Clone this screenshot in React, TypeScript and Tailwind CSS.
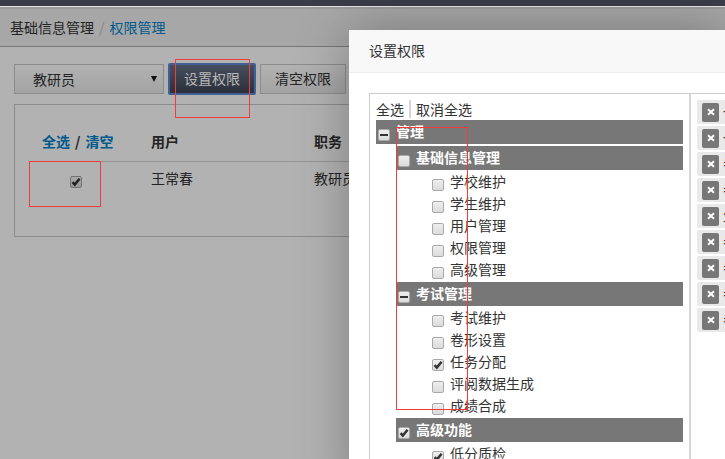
import React from "react";

type Mark = "none" | "checked" | "mixed";

type Item = { label: string; mark: Mark };
type Group = { label: string; mark: Mark; items: Item[] };

const groups: Group[] = [
  {
    label: "基础信息管理",
    mark: "none",
    items: [
      { label: "学校维护", mark: "none" },
      { label: "学生维护", mark: "none" },
      { label: "用户管理", mark: "none" },
      { label: "权限管理", mark: "none" },
      { label: "高级管理", mark: "none" },
    ],
  },
  {
    label: "考试管理",
    mark: "mixed",
    items: [
      { label: "考试维护", mark: "none" },
      { label: "卷形设置", mark: "none" },
      { label: "任务分配", mark: "checked" },
      { label: "评阅数据生成", mark: "none" },
      { label: "成绩合成", mark: "none" },
    ],
  },
  {
    label: "高级功能",
    mark: "checked",
    items: [{ label: "低分质检", mark: "checked" }],
  },
];

const chips = ["一", "一", "考", "考", "生", "考", "考", "考", "考"];

function Tick({ mark, label, dim = false }: { mark: Mark; label: string; dim?: boolean }) {
  const tone = dim
    ? "border-[#747474] from-[#a9a9a9] to-[#999999]"
    : "border-[#a9a9a9] from-[#eeeeee] to-[#dcdcdc]";
  return (
    <span className="relative block size-3 shrink-0">
      <input
        type="checkbox"
        aria-label={label}
        defaultChecked={mark === "checked"}
        ref={(el) => {
          if (el) el.indeterminate = mark === "mixed";
        }}
        className={`block size-3 appearance-none rounded-xs border bg-linear-to-b ${tone}`}
      />
      {mark === "checked" && (
        <svg viewBox="0 0 12 12" className="pointer-events-none absolute inset-0 size-3">
          <path d="M2.6 6.2 L4.8 8.6 L9.6 2.8" fill="none" stroke={dim ? "#222" : "#333"} strokeWidth="2.5" />
        </svg>
      )}
      {mark === "mixed" && (
        <svg viewBox="0 0 12 12" className="pointer-events-none absolute inset-0 size-3">
          <path d="M2 6 H10" stroke="#333" strokeWidth="2" />
        </svg>
      )}
    </span>
  );
}

function Bar({ label, mark }: { label: string; mark: Mark }) {
  return (
    <label className="mb-0.5 flex h-6 items-center gap-1.5 bg-[#777777] pl-0.5 font-bold text-white">
      <span className="pt-1.5">
        <Tick mark={mark} label={label} />
      </span>
      <span className="pb-0.5">{label}</span>
    </label>
  );
}

export default function App() {
  return (
    <div className="relative h-screen overflow-hidden bg-[#b2b2b2] font-['Noto_Sans_CJK_SC',sans-serif] text-sm leading-5 text-[#232323]">
      <div className="h-1.5 bg-[#3a3c49]" />
      <div className="h-px bg-[#e4e4e8]" />
      <nav className="flex h-10 items-center gap-[5px] border-t-2 border-b border-t-[#9b9b9b] border-b-[#777777] bg-[#a7a7a7] pb-0.5 pl-2.5">
        <span>基础信息管理</span>
        <span className="text-[#858585]">/</span>
        <a href="#rights" className="text-[#005a8c]">权限管理</a>
      </nav>

      <main className="pt-4 pl-3.5">
        <div className="flex items-center gap-1">
          <div className="relative">
            <select
              aria-label="职务"
              className="block h-[30px] w-[150px] appearance-none border border-[#8c8c8c] bg-linear-to-b from-[#b2b2b2] to-[#a3a3a3] pl-[18px]"
            >
              <option>教研员</option>
            </select>
            <span className="pointer-events-none absolute top-3 right-[7px] border-x-[3px] border-t-[6px] border-x-transparent border-t-[#111111]" />
          </div>
          <button className="h-8 w-[88px] rounded-xs border-2 border-[#415f97] bg-linear-to-b from-[#464e5e] to-[#2b303b] pb-0.5 text-[#b8b8b8]">
            设置权限
          </button>
          <button className="h-[30px] w-[86px] border border-[#8c8c8c] bg-linear-to-b from-[#b2b2b2] to-[#a3a3a3] pb-0.5">
            清空权限
          </button>
        </div>

        <section className="mt-[9px] h-[133px] border border-r-0 border-[#8c8c8c] pt-[26px] pl-[19px]">
          <table className="w-full table-fixed text-left">
            <thead>
              <tr className="border-b border-[#959595]">
                <th className="h-[30px] w-[117px] pl-2 align-top">
                  <a href="#all" className="text-[#005a8c]">全选</a>
                  <span className="mx-[5px]">/</span>
                  <a href="#clear" className="text-[#005a8c]">清空</a>
                </th>
                <th className="w-[163px] align-top">用户</th>
                <th className="align-top">职务</th>
              </tr>
            </thead>
            <tbody>
              <tr>
                <td className="h-9 pt-1.5 pl-9">
                  <Tick mark="checked" label="王常春" dim />
                </td>
                <td className="pb-0.5">王常春</td>
                <td className="pb-0.5">教研员</td>
              </tr>
            </tbody>
          </table>
        </section>
      </main>

      <div className="absolute top-[59px] left-[175px] h-[59px] w-[75px] border border-[#f23c3c]" />
      <div className="absolute top-[161px] left-[29px] h-[46px] w-[72px] border border-[#f23c3c]" />

      <div
        role="dialog"
        aria-label="设置权限"
        className="absolute top-[30px] right-0 -bottom-10 left-[349px] flex flex-col bg-white text-[#333333] shadow-[1px_1px_50px_rgba(0,0,0,0.3)]"
      >
        <h2 className="h-[43px] shrink-0 border-b border-[#eeeeee] bg-[#f8f8f8] pl-5 leading-10">设置权限</h2>
        <div className="mt-5 ml-5 flex flex-1 overflow-hidden border-t border-l border-[#cccccc]">
          <div className="flex-1 border-r-2 border-[#d6d6d6] p-1.5">
            <div className="flex h-5 items-start leading-[18px]">
              <button className="border-r-2 border-[#d6d6d6] pr-[5px]">全选</button>
              <button className="pl-[5px]">取消全选</button>
            </div>
            <Bar label="管理" mark="mixed" />
            <div className="pl-5">
              {groups.map((g) => (
                <div key={g.label}>
                  <Bar label={g.label} mark={g.mark} />
                  {g.items.map((it) => (
                    <label key={it.label} className="flex h-[22px] items-center gap-1.5 pl-9">
                      <span className="pt-1">
                        <Tick mark={it.mark} label={it.label} />
                      </span>
                      <span className="pb-1">{it.label}</span>
                    </label>
                  ))}
                </div>
              ))}
            </div>
          </div>
          <ul className="flex w-[34px] shrink-0 flex-col gap-0.5 overflow-hidden pt-1.5 pl-1.5">
            {chips.map((c, i) => (
              <li key={i} className="flex h-6 w-40 items-center gap-1 rounded-xs bg-[#e9e9e9] pl-[5px]">
                <button
                  aria-label="移除"
                  className="flex h-[19px] w-[17px] items-center justify-center rounded-xs bg-[#777777]"
                >
                  <svg viewBox="0 0 8 8" className="size-2">
                    <path d="M1 1.2 L7 6.8 M7 1.2 L1 6.8" stroke="#fff" strokeWidth="2" />
                  </svg>
                </button>
                <span className="pb-0.5">{c}</span>
              </li>
            ))}
          </ul>
        </div>
        <div className="pointer-events-none absolute top-[97px] left-[47px] h-[283px] w-[72px] border border-[#f23c3c]" />
      </div>
    </div>
  );
}
